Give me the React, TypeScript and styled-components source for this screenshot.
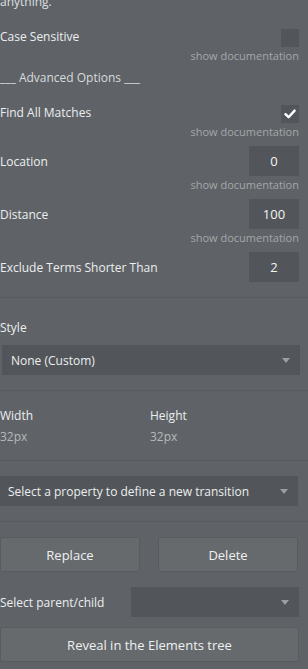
import * as React from 'react';
import styled, { createGlobalStyle } from 'styled-components';

const GlobalStyle = createGlobalStyle`
  html, body {
    margin: 0;
    padding: 0;
    background: #5f6367;
  }
  body {
    font-family: "Open Sans", "Liberation Sans", sans-serif;
    font-size: 12px;
    color: #eceeef;
    overflow: hidden;
  }
`;

const Panel = styled.div`
  width: 308px;
  height: 669px;
  padding: 0 9px 0 0;
  box-sizing: border-box;
  display: flex;
  flex-direction: column;
`;

const Description = styled.div`
  margin-top: -6px;
  line-height: 16px;
  height: 16px;
  color: #dfe1e2;
`;

const PropRow = styled.div<{ $h: number; $mt: number }>`
  display: flex;
  align-items: center;
  justify-content: space-between;
  height: ${(p) => p.$h}px;
  margin-top: ${(p) => p.$mt}px;
`;

const Label = styled.span<{ $raise?: number }>`
  font-size: 12px;
  color: #eceeef;
  white-space: nowrap;
  margin-bottom: ${(p) => p.$raise || 0}px;
`;

const DocLink = styled.div`
  text-align: right;
  font-size: 11px;
  line-height: 18px;
  height: 18px;
  color: #a4a7aa;
`;

const SectionTitle = styled.div`
  margin-top: 4px;
  line-height: 18px;
  height: 18px;
  font-size: 12px;
  color: #d8dadc;
`;

const Check = styled.div`
  width: 18px;
  height: 18px;
  background: #52565a;
  display: flex;
  align-items: center;
  justify-content: center;
`;

const NumBox = styled.div`
  width: 50px;
  height: 30px;
  background: #52565a;
  display: flex;
  align-items: center;
  justify-content: center;
  font-size: 13px;
  color: #f2f3f4;
`;

const Separator = styled.div<{ $mt: number }>`
  height: 1px;
  background: #56595d;
  margin: ${(p) => p.$mt}px -9px 0 0;
`;

const FieldLabel = styled.div<{ $mt: number }>`
  margin-top: ${(p) => p.$mt}px;
  line-height: 16px;
  height: 16px;
  color: #eceeef;
`;

const Dropdown = styled.div<{ $mt: number; $ml?: number; $pl: number; $w?: number }>`
  height: 30px;
  margin-top: ${(p) => p.$mt}px;
  margin-left: ${(p) => p.$ml || 0}px;
  margin-right: ${(p) => (p.$ml ? -1 : 0)}px;
  ${(p) => (p.$w ? `width: ${p.$w}px;` : '')}
  padding: 0 10px 0 ${(p) => p.$pl}px;
  box-sizing: border-box;
  background: #52565a;
  display: flex;
  align-items: center;
  justify-content: space-between;
  font-size: 12px;
  color: #eceeef;
`;

const Caret = styled.span`
  width: 0;
  height: 0;
  border-left: 4px solid transparent;
  border-right: 4px solid transparent;
  border-top: 5px solid #9a9ea2;
  margin-top: 1px;
`;

const SizeGrid = styled.div`
  display: grid;
  grid-template-columns: 150px 1fr;
  margin-top: 17px;
  row-gap: 5px;
`;

const SizeLabel = styled.div`
  line-height: 16px;
  color: #eceeef;
`;

const SizeValue = styled.div`
  line-height: 16px;
  color: #b6b9bb;
`;

const ButtonRow = styled.div`
  display: flex;
  justify-content: space-between;
  margin-top: 15px;
  margin-right: 1px;
`;

const Button = styled.button<{ $mt?: number; $w?: number }>`
  ${(p) => (p.$w ? `width: ${p.$w}px;` : 'width: 100%;')}
  height: 35px;
  margin-top: ${(p) => p.$mt || 0}px;
  background: #666a6d;
  border: 1px solid #585c5f;
  border-radius: 2px;
  font-family: "Open Sans", "Liberation Sans", sans-serif;
  font-size: 13px;
  color: #eef0f1;
  padding: 0;
`;

const ParentRow = styled.div`
  display: flex;
  align-items: center;
  justify-content: space-between;
  margin-top: 15px;
`;

function CheckMark() {
  return (
    <svg width="12" height="10" viewBox="0 0 12 10">
      <path d="M1.5 5.2 L4.6 8.2 L10.6 1.6" fill="none" stroke="#ffffff" strokeWidth="2.4" strokeLinecap="round" strokeLinejoin="round" />
    </svg>
  );
}

export default function App() {
  return (
    <>
      <GlobalStyle />
      <Panel>
        <Description>anything.</Description>

        <PropRow $h={18} $mt={19}>
          <Label $raise={3}>Case Sensitive</Label>
          <Check />
        </PropRow>
        <DocLink>show documentation</DocLink>

        <SectionTitle>___ Advanced Options ___</SectionTitle>

        <PropRow $h={18} $mt={18}>
          <Label $raise={3}>Find All Matches</Label>
          <Check>
            <CheckMark />
          </Check>
        </PropRow>
        <DocLink>show documentation</DocLink>

        <PropRow $h={30} $mt={5}>
          <Label>Location</Label>
          <NumBox>0</NumBox>
        </PropRow>
        <DocLink>show documentation</DocLink>

        <PropRow $h={30} $mt={5}>
          <Label>Distance</Label>
          <NumBox>100</NumBox>
        </PropRow>
        <DocLink>show documentation</DocLink>

        <PropRow $h={30} $mt={5}>
          <Label>Exclude Terms Shorter Than</Label>
          <NumBox>2</NumBox>
        </PropRow>

        <Separator $mt={15} />

        <FieldLabel $mt={22}>Style</FieldLabel>
        <Dropdown $mt={9} $ml={2} $pl={9}>
          <span>None (Custom)</span>
          <Caret />
        </Dropdown>

        <Separator $mt={15} />

        <SizeGrid>
          <SizeLabel>Width</SizeLabel>
          <SizeLabel>Height</SizeLabel>
          <SizeValue>32px</SizeValue>
          <SizeValue>32px</SizeValue>
        </SizeGrid>

        <Separator $mt={15} />

        <Dropdown $mt={15} $pl={8} $w={298}>
          <span>Select a property to define a new transition</span>
          <Caret />
        </Dropdown>

        <Separator $mt={15} />

        <ButtonRow>
          <Button $w={140}>Replace</Button>
          <Button $w={140}>Delete</Button>
        </ButtonRow>

        <ParentRow>
          <Label>Select parent/child</Label>
          <Dropdown $mt={0} $pl={8} $w={168}>
            <span />
            <Caret />
          </Dropdown>
        </ParentRow>

        <Button $mt={10}>Reveal in the Elements tree</Button>
      </Panel>
    </>
  );
}
